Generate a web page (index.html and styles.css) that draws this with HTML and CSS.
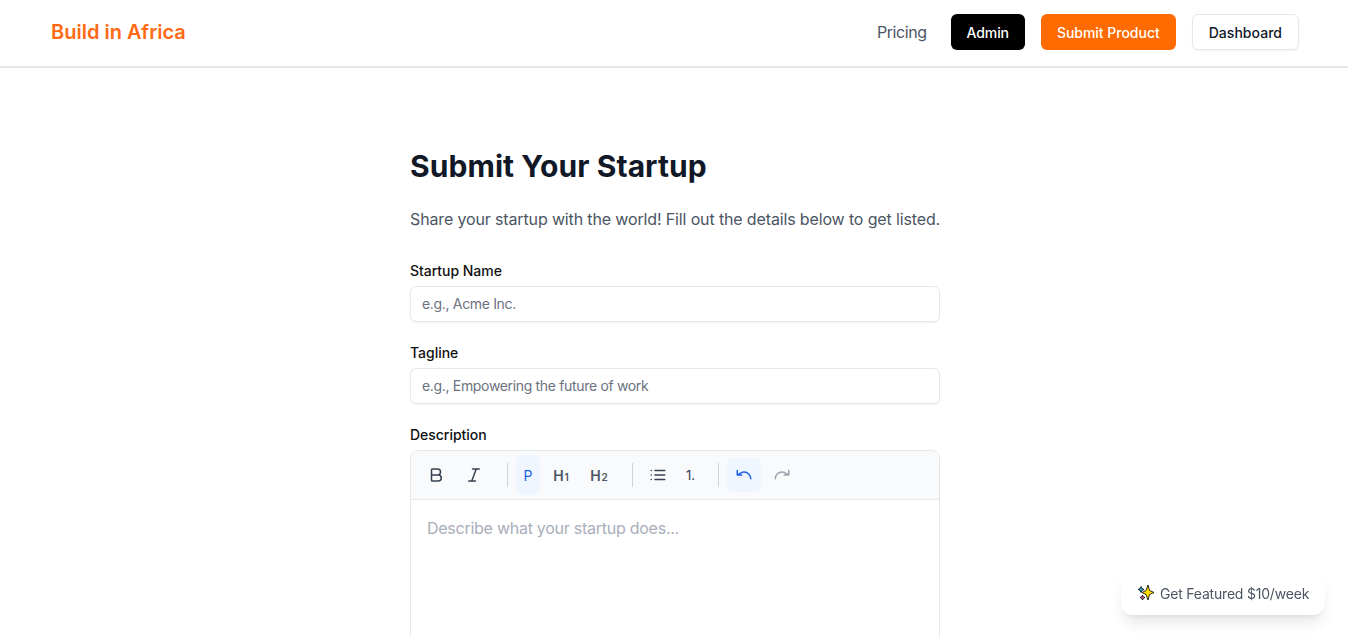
FILE: index.html
```html
<!DOCTYPE html>
<html lang="en">
<head>
<meta charset="utf-8">
<title>Submit Your Startup - Build in Africa</title>
<link rel="stylesheet" href="styles.css">
</head>
<body>
<header class="site-header">
  <a class="brand" href="#">Build in Africa</a>
  <nav class="nav">
    <a class="nav-link" href="#">Pricing</a>
    <a class="btn btn-admin" href="#">Admin</a>
    <a class="btn btn-submit" href="#">Submit Product</a>
    <a class="btn btn-dash" href="#">Dashboard</a>
  </nav>
</header>
<main class="main">
  <h1 class="title">Submit Your Startup</h1>
  <p class="lead">Share your startup with the world! Fill out the details below to get listed.</p>
  <form class="form">
    <div class="field">
      <label class="label" for="name">Startup Name</label>
      <input class="input" id="name" type="text" placeholder="e.g., Acme Inc.">
    </div>
    <div class="field">
      <label class="label" for="tagline">Tagline</label>
      <input class="input" id="tagline" type="text" placeholder="e.g., Empowering the future of work">
    </div>
    <div class="field">
      <span class="label">Description</span>
      <div class="editor">
        <div class="toolbar">
          <button class="tool" type="button" aria-label="Bold"><svg class="icon" viewBox="0 0 24 24"><path d="M6 12h9a4 4 0 0 1 0 8H7a1 1 0 0 1-1-1V5a1 1 0 0 1 1-1h7a4 4 0 0 1 0 8"/></svg></button>
          <button class="tool" type="button" aria-label="Italic"><svg class="icon" viewBox="0 0 24 24"><path d="M19 4h-9M14 20H5M15 4 9 20"/></svg></button>
          <span class="divider"></span>
          <button class="tool tool-text tool-active" type="button">P</button>
          <button class="tool tool-head" type="button">H<small class="sub">1</small></button>
          <button class="tool tool-head" type="button">H<small class="sub">2</small></button>
          <span class="divider"></span>
          <button class="tool" type="button" aria-label="Bullet list"><svg class="icon" viewBox="0 0 24 24"><path d="M3 6h.01M3 12h.01M3 18h.01M8 6h13M8 12h13M8 18h13"/></svg></button>
          <button class="tool tool-text tool-num" type="button">1.</button>
          <span class="divider"></span>
          <button class="tool tool-undo" type="button" aria-label="Undo"><svg class="icon" viewBox="0 0 24 24"><path d="M3 6v6h6M21 17a9 9 0 0 0-9-9 9 9 0 0 0-6 2.3L3 12"/></svg></button>
          <button class="tool tool-redo" type="button" aria-label="Redo"><svg class="icon" viewBox="0 0 24 24"><path d="M21 6v6h-6M3 17a9 9 0 0 1 9-9 9 9 0 0 1 6 2.3l3 1.700"/></svg></button>
        </div>
        <div class="editor-body">Describe what your startup does...</div>
      </div>
    </div>
  </form>
</main>
<a class="featured" href="#">
  <svg class="spark" viewBox="0 0 16 16"><path class="s-yellow" d="M10 0 11.500 5.500 16 7.500 11.500 9.500 10 15 8 9.500 4 7.500 8 5.500z"/><path class="s-blue" d="M3 1.500l.9 2.100L6 4.500l-2.100.9L3 7.500l-.9-2.100L0 4.500l2.100-.9z"/><path class="s-pink" d="M4.500 10l.8 1.800L7 12.500l-1.700.8-.8 1.700-.8-1.700L2 12.500l1.700-.7z"/></svg>
  <span>Get Featured $10/week</span>
</a>
</body>
</html>
```

FILE: styles.css
```css
* { box-sizing: border-box; }
html, body { margin: 0; padding: 0; background: #fff; }
html { overflow: hidden; height: 100%; }
body { font-family: "Inter", "Liberation Sans", sans-serif; color: #111827; }
a { text-decoration: none; color: inherit; }

.site-header {
  height: 68px;
  border-bottom: 2px solid #e5e7eb;
  padding: 0 49px 2px 51px;
  display: flex;
  align-items: center;
  justify-content: space-between;
}
.brand { color: #ff6a13; font-size: 20px; font-weight: 600; letter-spacing: 0; }
.nav { display: flex; align-items: center; gap: 16px; }
.nav-link { color: #4b5563; font-size: 16px; margin-right: 8px; letter-spacing: -0.45px; }
.btn {
  height: 36px;
  padding: 0 16px;
  border-radius: 6px;
  font-size: 14px;
  font-weight: 500;
  display: flex;
  align-items: center;
  letter-spacing: -0.02px;
}
.btn-admin { background: #000; color: #fff; letter-spacing: -0.1px; }
.btn-submit { background: #ff6b00; color: #fff; }
.btn-dash { background: #fff; color: #111827; border: 1px solid #e5e7eb; box-shadow: 0 1px 2px rgba(0,0,0,.05); letter-spacing: 0.03px; font-weight: 450; }

.main { width: 530px; margin: 80px 0 0 410px; }
.title { margin: 0 0 24px; font-size: 30px; line-height: 36px; font-weight: 700; color: #111827; letter-spacing: 0.07px; }
.lead { margin: -1px 0 29px; font-size: 16px; line-height: 24px; color: #4b5563; letter-spacing: -0.14px; white-space: nowrap; }
.form { display: flex; flex-direction: column; gap: 20px; }
.field { display: flex; flex-direction: column; }
.label { display: block; font-size: 14px; line-height: 22px; font-weight: 450; color: #111; margin-bottom: 4px; letter-spacing: -0.03px; }
.input {
  height: 36px;
  width: 100%;
  border: 1px solid #e5e7eb;
  border-radius: 6px;
  padding: 0 12px 1px 11px;
  font: 14px "Inter", "Liberation Sans", sans-serif;
  letter-spacing: -0.33px;
  box-shadow: 0 1px 2px rgba(0,0,0,.05);
  outline: none;
}
.input::placeholder { color: #6b7280; opacity: 1; }

.editor { border: 1px solid #e5e7eb; border-radius: 8px; overflow: hidden; background: #fff; }
.toolbar {
  height: 49px;
  padding: 4px 8px;
  border-bottom: 1px solid #e5e7eb;
  background: #f9fafb;
  display: flex;
  align-items: center;
  gap: 4px;
}
.tool {
  width: 34px;
  height: 34px;
  padding: 0;
  border: 0;
  border-radius: 6px;
  background: transparent;
  color: #374151;
  display: flex;
  align-items: center;
  justify-content: center;
  font-family: "Inter", "Liberation Sans", sans-serif;
  font-size: 14px;
}
.icon { width: 18px; height: 18px; fill: none; stroke: currentColor; stroke-width: 2; stroke-linecap: round; stroke-linejoin: round; }
.tool-text { width: 24px; height: 40px; }
.tool-num { width: 23px; font-size: 13px; }
.tool-active { background: #eff6ff; color: #2563eb; }
.tool-head { font-weight: 600; color: #4b5563; }
.sub { font-size: 10px; font-weight: 600; margin-left: 1px; margin-top: 3px; }
.tool-undo { background: #eff6ff; color: #2563eb; }
.tool-redo { color: #9ca3af; }
.divider { width: 1px; height: 24px; background: #d1d5db; margin: 0 4px 0 12px; }
.editor-body { min-height: 220px; padding: 16px; color: #a8aeba; font-size: 16px; line-height: 24px; letter-spacing: -0.26px; }

.featured {
  position: fixed;
  right: 23px;
  bottom: 22px;
  height: 44px;
  width: 204px;
  padding: 0 16px 0 17px;
  background: #fff;
  border-radius: 12px;
  box-shadow: 0 10px 15px -3px rgba(0,0,0,.1), 0 4px 6px -4px rgba(0,0,0,.1);
  display: flex;
  align-items: center;
  gap: 6px;
  font-size: 14px;
  color: #4b5563;
  letter-spacing: -0.2px;
  white-space: nowrap;
}
.spark { width: 16px; height: 16px; flex: none; stroke: #111; stroke-width: .9; stroke-linejoin: round; }
.s-yellow { fill: #ffdd00; }
.s-blue { fill: #22b8e6; }
.s-pink { fill: #f06aa8; }
```
